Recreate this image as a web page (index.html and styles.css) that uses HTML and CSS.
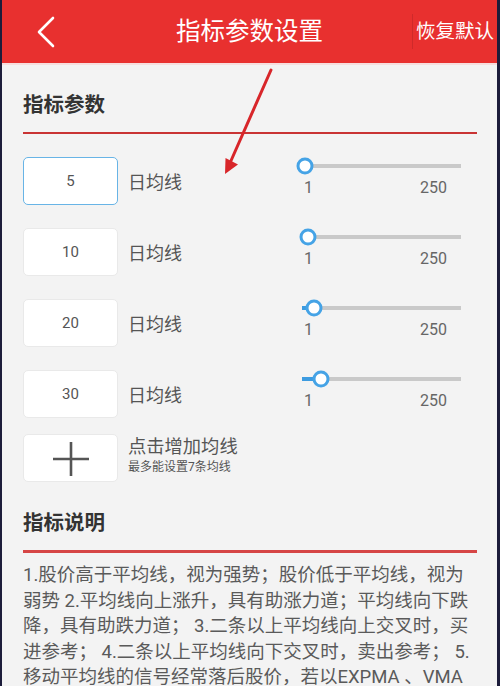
FILE: index.html
```html
<!DOCTYPE html>
<html lang="zh-CN">
<head>
<meta charset="utf-8">
<title>指标参数设置</title>
<link rel="stylesheet" href="styles.css">
</head>
<body>
<div class="app">
  <header class="topbar">
    <div class="back">
      <svg width="18" height="32" viewBox="0 0 18 32"><polyline points="16,2 2,16 16,30" fill="none" stroke="#fff" stroke-width="2.6" stroke-linecap="round" stroke-linejoin="round"/></svg>
    </div>
    <h1 class="title">指标参数设置</h1>
    <div class="right"><span class="reset">恢复默认</span></div>
  </header>

  <main class="content">
    <h2 class="sec-title">指标参数</h2>
    <div class="sec-line"></div>

    <div class="rows">
      <div class="row">
        <div class="box active">5</div>
        <div class="label">日均线</div>
        <div class="slider">
          <div class="track"><div class="fill" style="width:2.5px"></div><div class="thumb" style="left:2.5px"></div></div>
          <div class="ticks"><span>1</span><span>250</span></div>
        </div>
      </div>
      <div class="row">
        <div class="box">10</div>
        <div class="label">日均线</div>
        <div class="slider">
          <div class="track"><div class="fill" style="width:5.7px"></div><div class="thumb" style="left:5.7px"></div></div>
          <div class="ticks"><span>1</span><span>250</span></div>
        </div>
      </div>
      <div class="row">
        <div class="box">20</div>
        <div class="label">日均线</div>
        <div class="slider">
          <div class="track"><div class="fill" style="width:12.1px"></div><div class="thumb" style="left:12.1px"></div></div>
          <div class="ticks"><span>1</span><span>250</span></div>
        </div>
      </div>
      <div class="row">
        <div class="box">30</div>
        <div class="label">日均线</div>
        <div class="slider">
          <div class="track"><div class="fill" style="width:18.5px"></div><div class="thumb" style="left:18.5px"></div></div>
          <div class="ticks"><span>1</span><span>250</span></div>
        </div>
      </div>
    </div>

    <div class="add-row">
      <div class="box plus">
        <svg width="36" height="36" viewBox="0 0 36 36"><line x1="0" y1="17" x2="36" y2="17" stroke="#555" stroke-width="2.6"/><line x1="18" y1="0" x2="18" y2="34" stroke="#555" stroke-width="2.6"/></svg>
      </div>
      <div class="add-text">
        <div class="add-main">点击增加均线</div>
        <div class="add-sub">最多能设置7条均线</div>
      </div>
    </div>

    <h2 class="sec-title sec2">指标说明</h2>
    <div class="sec-line thick"></div>
    <p class="desc">1.股价高于平均线，视为强势；股价低于平均线，视为弱势 2.平均线向上涨升，具有助涨力道；平均线向下跌降，具有助跌力道； 3.二条以上平均线向上交叉时，买进参考； 4.二条以上平均线向下交叉时，卖出参考； 5.移动平均线的信号经常落后股价，若以EXPMA 、VMA 指标配合使用，效果会更好。</p>
  </main>

  <svg class="arrow" width="500" height="686" viewBox="0 0 500 686">
    <line x1="271" y1="70" x2="230" y2="163" stroke="#d8262a" stroke-width="3" stroke-linecap="round"/>
    <polygon points="225,174 225.5,158 238,164.5" fill="#d8262a"/>
  </svg>
</div>
</body>
</html>
```

FILE: styles.css
```css
html, body {
  margin: 0;
  padding: 0;
}
body {
  width: 500px;
  height: 686px;
  overflow: hidden;
  font-family: Roboto, "Noto Sans CJK SC", sans-serif;
}
.app {
  position: relative;
  width: 500px;
  height: 686px;
  overflow: hidden;
  box-sizing: border-box;
  border-left: 2px solid #1c1c3a;
  border-right: 3px solid #1c1c3a;
  background: #f3f3f3;
}
.topbar {
  height: 63px;
  background: #e8302f;
  display: grid;
  grid-template-columns: 1fr auto 1fr;
  align-items: center;
  color: #fff;
  border-bottom: 2px solid #f6dede;
  box-sizing: content-box;
}
.back {
  padding-left: 35px;
  display: flex;
  align-items: center;
  height: 63px;
}
.title {
  margin: 0;
  font-size: 24.5px;
  font-weight: normal;
  line-height: 63px;
  white-space: nowrap;
}
.right {
  display: flex;
  justify-content: flex-end;
  align-items: center;
}
.reset {
  font-size: 19.5px;
  line-height: 35px;
  padding-left: 3px;
  margin-right: 3px;
  border-left: 1px solid #cf2a2a;
  white-space: nowrap;
}
.content {
  padding: 0 20px 0 21px;
}
.sec-title {
  margin: 26px 0 0 0;
  font-size: 20.5px;
  line-height: 28px;
  font-weight: bold;
  color: #333;
}
.sec-line {
  margin-top: 13px;
  height: 2px;
  background: #c93434;
}
.sec-line.thick {
  height: 3px;
  background: #d64646;
}
.rows {
  margin-top: 23px;
  display: flex;
  flex-direction: column;
  gap: 23px;
}
.row {
  display: flex;
  align-items: center;
  height: 48px;
}
.box {
  width: 95px;
  height: 48px;
  box-sizing: border-box;
  background: #fff;
  border: 1px solid #e9e9e9;
  border-radius: 5px;
  display: flex;
  align-items: center;
  justify-content: center;
  font-size: 15px;
  color: #555;
  flex-shrink: 0;
}
.box.active {
  border: 1.5px solid #68b4e6;
}
.label {
  width: 184px;
  padding-left: 10px;
  box-sizing: border-box;
  font-size: 18px;
  color: #555;
  line-height: 24px;
  margin-top: 3px;
}
.slider {
  width: 159px;
  align-self: flex-start;
}
.track {
  position: relative;
  margin-top: 7px;
  height: 4px;
  background: #c9c9c9;
}
.fill {
  height: 4px;
  background: #3c9be0;
}
.thumb {
  position: absolute;
  top: 2px;
  width: 17px;
  height: 17px;
  box-sizing: border-box;
  border: 3px solid #45a3e6;
  border-radius: 50%;
  background: #fff;
  transform: translate(-50%, -50%);
}
.ticks {
  display: flex;
  justify-content: space-between;
  padding: 0 14px 0 2px;
  margin-top: 10px;
  font-size: 16px;
  line-height: 20px;
  color: #666;
}
.add-row {
  margin-top: 16px;
  display: flex;
  align-items: flex-start;
}
.plus {
  padding-top: 4px;
}
.add-text {
  padding-left: 10px;
  padding-top: 1px;
}
.add-main {
  font-size: 18.3px;
  line-height: 24px;
  color: #555;
}
.add-sub {
  font-size: 12px;
  line-height: 16px;
  color: #555;
}
.sec2 {
  margin-top: 27px;
}
.desc {
  margin: 10px 0 0 0;
  font-size: 18.5px;
  line-height: 25.5px;
  color: #5a5a5a;
}
.arrow {
  position: absolute;
  left: -2px;
  top: 0;
  pointer-events: none;
}
```
